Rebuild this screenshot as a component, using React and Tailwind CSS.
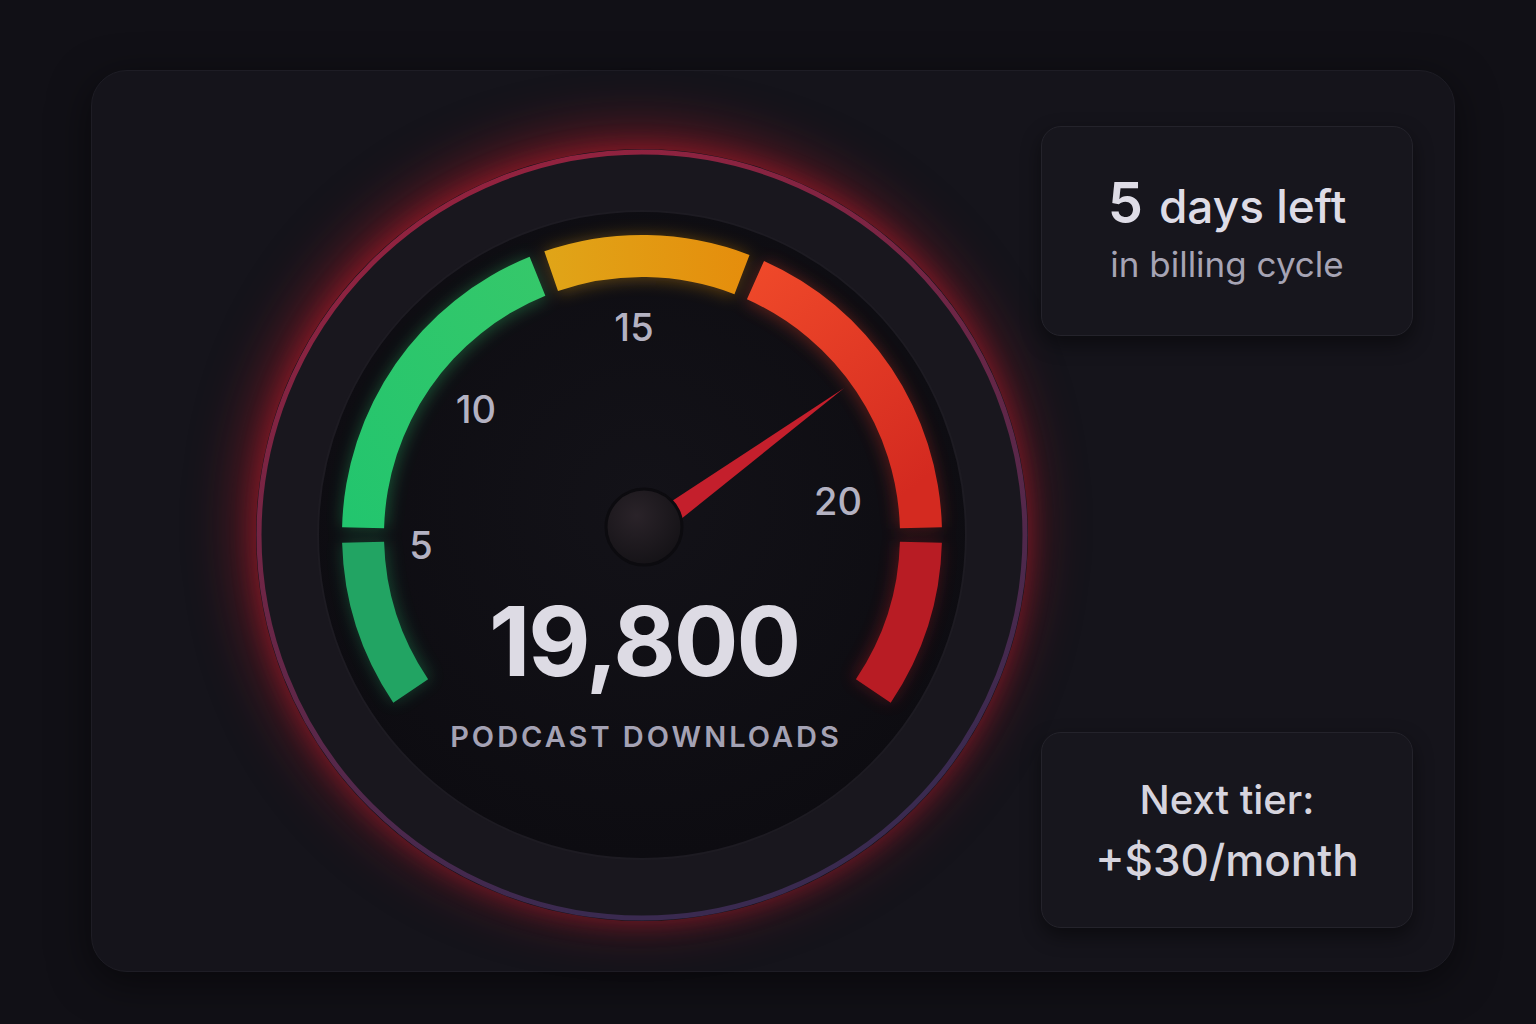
export default function App() {
  const cx = 400, cy = 400;
  const pt = (r, a) => {
    const t = (a * Math.PI) / 180;
    return [cx + r * Math.sin(t), cy - r * Math.cos(t)];
  };
  const arc = (r1, r2, a1, a2) => {
    const [x1, y1] = pt(r2, a1), [x2, y2] = pt(r2, a2), [x3, y3] = pt(r1, a2), [x4, y4] = pt(r1, a1);
    return `M${x1} ${y1} A${r2} ${r2} 0 0 1 ${x2} ${y2} L${x3} ${y3} A${r1} ${r1} 0 0 0 ${x4} ${y4} Z`;
  };
  const segs = [
    [-124, -91.5, "#22a463"],
    [-88.5, -22, "url(#gGreen)"],
    [-19, 21, "url(#gYellow)"],
    [24, 88.5, "url(#gRed)"],
    [91.5, 124, "#b81c24"],
  ];
  const [nx, ny] = pt(250, 54);
  const [bx1, by1] = pt(12, 54 - 90);
  const [bx2, by2] = pt(12, 54 + 90);
  const font = "Inter, 'Noto Sans', sans-serif";
  return (
    <div className="w-[1536px] h-[1024px] bg-[#111016] pt-[70px] pl-[91px]" style={{ fontFamily: font }}>
      <div className="w-[1364px] h-[902px] rounded-[36px] bg-[#15141b] border border-[#1e1d25] shadow-[0_10px_40px_rgba(0,0,0,0.5)] flex">
        <div className="ml-[164px] mt-[78px] w-[772px] h-[772px] rounded-full shadow-[-6px_-10px_60px_rgba(225,30,45,0.55),0_0_25px_rgba(200,30,50,0.35)] flex items-center justify-center">
          <svg width="800" height="800" viewBox="0 0 800 800" className="shrink-0">
            <defs>
              <linearGradient id="ring" x1="0" y1="0" x2="0.4" y2="1">
                <stop offset="0" stopColor="#a0213c" />
                <stop offset="1" stopColor="#3a2a50" />
              </linearGradient>
              <linearGradient id="gGreen" x1="0" y1="1" x2="1" y2="0">
                <stop offset="0" stopColor="#22c56e" />
                <stop offset="1" stopColor="#36c86a" />
              </linearGradient>
              <linearGradient id="gYellow" x1="0" y1="0" x2="1" y2="0">
                <stop offset="0" stopColor="#e0a518" />
                <stop offset="1" stopColor="#e58d0c" />
              </linearGradient>
              <linearGradient id="gRed" x1="0" y1="0" x2="0.6" y2="1">
                <stop offset="0" stopColor="#f04a2a" />
                <stop offset="1" stopColor="#d42a20" />
              </linearGradient>
              <radialGradient id="disc" cx="0.5" cy="0.45" r="0.55">
                <stop offset="0" stopColor="#131218" />
                <stop offset="1" stopColor="#0d0c11" />
              </radialGradient>
              <radialGradient id="hub" cx="0.4" cy="0.35" r="0.7">
                <stop offset="0" stopColor="#2a2329" />
                <stop offset="1" stopColor="#141216" />
              </radialGradient>
              <filter id="blur"><feGaussianBlur stdDeviation="8" /></filter>
            </defs>
            <circle cx={cx} cy={cy} r="383" fill="#19171e" stroke="url(#ring)" strokeWidth="5" />
            <circle cx={cx} cy={cy} r="324" fill="url(#disc)" stroke="#1d1b22" strokeWidth="2" />
            <g filter="url(#blur)" opacity="0.35">
              {segs.map(([a, b, c], i) => <path key={i} d={arc(255, 300, a, b)} fill={c} />)}
            </g>
            {segs.map(([a, b, c], i) => <path key={i} d={arc(258, 300, a, b)} fill={c} />)}
            <g fill="#b4b2c2" fontSize="38" fontWeight="500" textAnchor="middle" fontFamily={font}>
              <text x="392" y="206">15</text>
              <text x="234" y="288">10</text>
              <text x="179" y="424">5</text>
              <text x="596" y="380">20</text>
            </g>
            <polygon points={`${bx1},${by1} ${nx},${ny} ${bx2},${by2}`} fill="#c41f2c" />
            <circle cx="402" cy="392" r="38" fill="url(#hub)" stroke="#0c0b0f" strokeWidth="3" />
            <text x="402" y="541" textAnchor="middle" fill="#dddbe4" fontSize="96" fontWeight="700" fontFamily={font} letterSpacing="-2">19,800</text>
            <text x="404" y="612" textAnchor="middle" fill="#a4a2b4" fontSize="29" fontWeight="600" fontFamily={font} letterSpacing="3">PODCAST DOWNLOADS</text>
          </svg>
        </div>
        <div className="ml-auto mr-[41px] mt-[55px] mb-[43px] w-[372px] flex flex-col justify-between">
          <div className="h-[210px] rounded-[20px] bg-[#17161d] border border-[#24232b] shadow-[0_8px_20px_rgba(0,0,0,0.45)] flex flex-col items-center justify-center">
            <div className="flex items-baseline gap-4 text-[#dedce6]">
              <span className="text-[56px] font-semibold leading-[64px]">5</span>
              <span className="text-[46px] font-medium leading-[64px]">days left</span>
            </div>
            <div className="text-[35px] text-[#a6a4b4]">in billing cycle</div>
          </div>
          <div className="h-[196px] rounded-[20px] bg-[#17161d] border border-[#24232b] shadow-[0_8px_20px_rgba(0,0,0,0.45)] flex flex-col items-center justify-center text-[#d6d4de]">
            <div className="text-[40px] font-medium leading-[60px]">Next tier:</div>
            <div className="text-[44px] font-medium leading-[60px]">+$30/month</div>
          </div>
        </div>
      </div>
    </div>
  );
}
